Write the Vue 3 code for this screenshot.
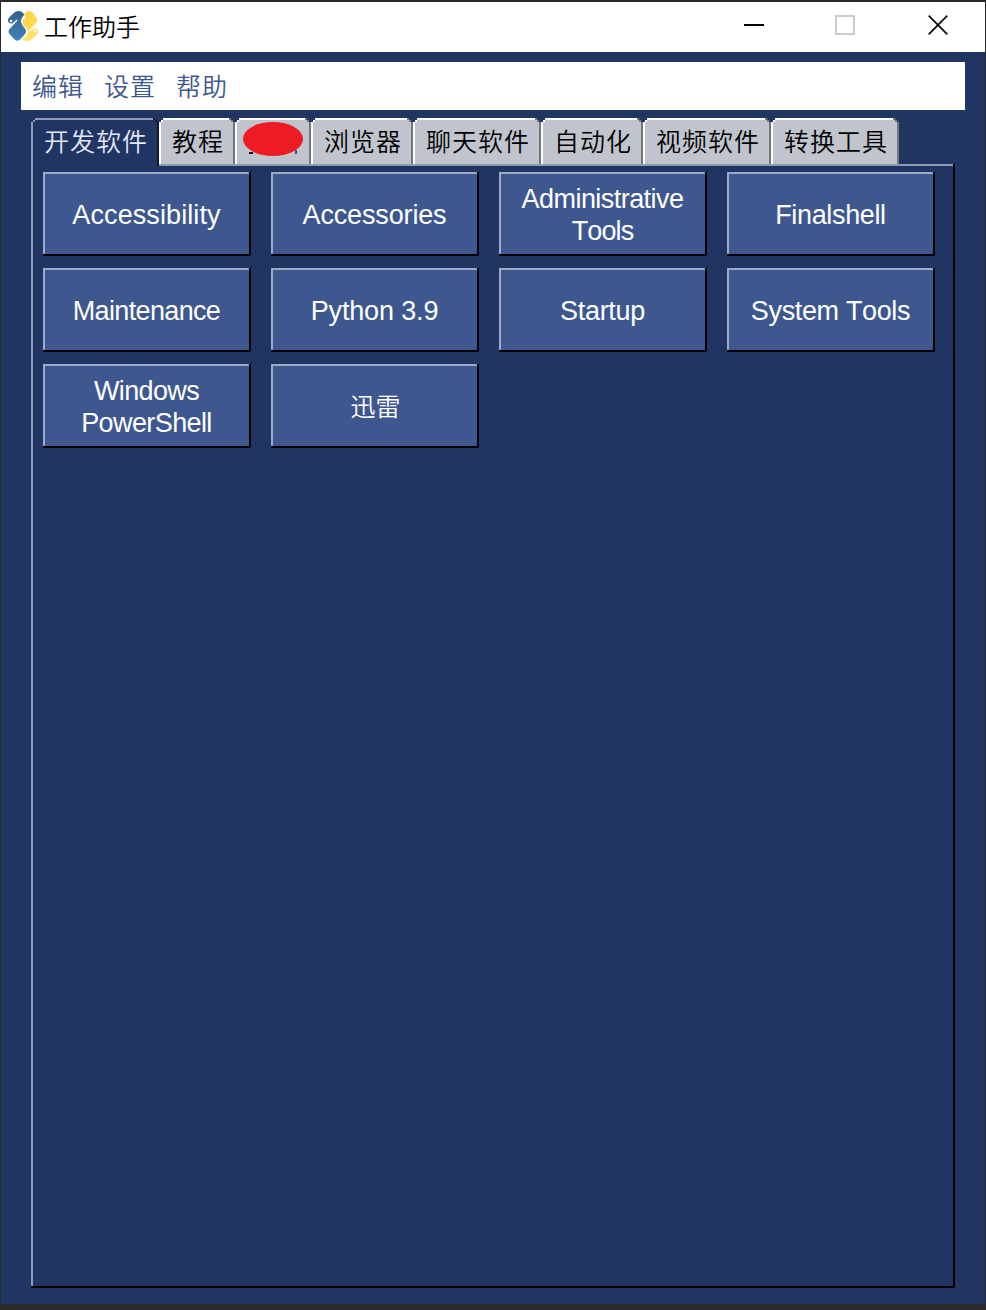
<script setup>
const menus = ['编辑', '设置', '帮助']
const tabs = [
  { label: '开发软件', active: true },
  { label: '教程' },
  { label: '', hidden: true },
  { label: '浏览器' },
  { label: '聊天软件' },
  { label: '自动化' },
  { label: '视频软件' },
  { label: '转换工具' },
]
const apps = [
  [{ t: 'Accessibility', s: 0.1 }],
  [{ t: 'Accessories', s: -0.15 }],
  [{ t: 'Administrative', s: -0.55 }, { t: 'Tools', s: -0.9 }],
  [{ t: 'Finalshell', s: -0.35 }],
  [{ t: 'Maintenance', s: -0.65 }],
  [{ t: 'Python 3.9', s: -0.15 }],
  [{ t: 'Startup', s: -0.3 }],
  [{ t: 'System Tools', s: -0.35 }],
  [{ t: 'Windows', s: -0.65 }, { t: 'PowerShell', s: -0.6 }],
  [{ t: '迅雷', s: 0, cjk: true }],
]
</script>

<template>
  <div class="window">
    <header class="titlebar">
      <svg class="logo" width="32" height="32" viewBox="0 0 32 32">
        <defs>
          <linearGradient id="blue" x1="0" y1="0" x2="0" y2="1">
            <stop offset="0" stop-color="#35618c" /><stop offset="1" stop-color="#3d83bb" />
          </linearGradient>
          <linearGradient id="gold" x1="0" y1="0" x2="0" y2="1">
            <stop offset="0" stop-color="#ffd23c" /><stop offset="1" stop-color="#ffe56e" />
          </linearGradient>
        </defs>
        <path fill="url(#blue)" d="M8 2Q11 .5 14.500 1.500L17.500 4.500Q13.500 8.500 14 12Q14.500 15 18 18.500Q20 21 18.500 23.500L13.500 29Q10.500 32 7.500 29.500L2.500 24Q.5 21.500 2.500 19L10.500 10.500L9.500 9.500L5.500 13.500Q1 14 1 10.500Q1 8.500 3 6.500Z" />
        <path fill="url(#gold)" d="M18 3Q21 0 25 2L29 7Q31.500 10 29 13L21.500 21L22.500 22L26.500 18.500Q31 18 31 21.500Q31 23.500 29 25.500L24 30Q21 31.500 17.500 30.500L15.500 29.500L19.500 25.500Q22 22 19.500 18.500L16.500 15Q14.500 12 16.500 9.500L18.500 7.500Q16.500 5.500 18 3Z" />
        <circle cx="4" cy="11" r="1.300" fill="#fff" /><circle cx="28" cy="21" r="1.300" fill="#fff" />
      </svg>
      <span class="title">工作助手</span>
      <div class="controls">
        <svg width="20" height="20"><path d="M0 10H20" stroke="#000" stroke-width="2" /></svg>
        <svg width="20" height="20"><rect x="1" y="1" width="18" height="18" fill="none" stroke="#ccc" stroke-width="2" /></svg>
        <svg width="20" height="20"><path d="M.7.7L19.300 19.300M19.300.7L.7 19.300" stroke="#0c0c12" stroke-width="1.800" /></svg>
      </div>
    </header>
    <main class="body">
      <nav class="menu"><span v-for="m in menus" :key="m">{{ m }}</span></nav>
      <div class="tabs">
        <div v-for="t in tabs" :key="t.label" class="tab" :class="{ active: t.active }">
          <span>{{ t.label }}</span>
          <svg v-if="t.hidden" class="blot" width="60" height="36" viewBox="0 0 60 36">
            <rect x="6" y="30" width="4" height="2" fill="#111" />
            <rect x="52" y="28" width="2" height="4" fill="#3b558c" />
            <ellipse cx="30" cy="17" rx="30" ry="17" fill="#ed1c24" />
          </svg>
        </div>
      </div>
      <section class="panel">
        <button v-for="(a, i) in apps" :key="i" class="app">
          <span v-for="l in a" :key="l.t" :class="{ cjk: l.cjk }" :style="{ letterSpacing: l.s + 'px' }">{{ l.t }}</span>
        </button>
      </section>
    </main>
  </div>
</template>

<style>
body { margin: 0; background: #282828; }
</style>

<style scoped>
.window {
  box-sizing: border-box;
  width: 986px;
  height: 1310px;
  display: flex;
  flex-direction: column;
  border: solid #2a292b;
  border-width: 2px 1px 6px;
  font-family: "Liberation Sans", "Noto Sans CJK SC", sans-serif;
}
.titlebar {
  height: 50px;
  flex: none;
  display: flex;
  background: #fff;
}
.logo { margin: 8px 0 0 6px; }
.title { margin-left: 5px; font-size: 24px; line-height: 51px; color: #000; font-weight: 350; }
.controls { display: flex; gap: 71px; margin: 13px 37px 0 auto; }
.controls svg { display: block; }
.controls svg:last-child { margin-left: 2px; }
.body {
  flex: 1;
  display: flex;
  flex-direction: column;
  padding: 10px 30px 16px;
  background: #203562;
}
.menu {
  width: 933px;
  height: 48px;
  display: flex;
  gap: 20px;
  margin: 0 0 8px -10px;
  padding-left: 11px;
  background: #fff;
  color: #3e588f;
  font-size: 25px;
  letter-spacing: 1px;
  line-height: 51px;
  font-weight: 350;
}
.tabs { display: flex; height: 46px; }
.tab {
  --light: #fff;
  --dark: #767676;
  box-sizing: border-box;
  position: relative;
  min-width: 76px;
  height: 46px;
  padding: 0 11px 0 13px;
  box-shadow: inset 2px 2px var(--light), inset -2px 0 var(--dark);
  clip-path: polygon(4px 0, calc(100% - 4px) 0, calc(100% - 4px) 2px, calc(100% - 2px) 2px, calc(100% - 2px) 4px, 100% 4px, 100% 100%, 0 100%, 0 4px, 2px 4px, 2px 2px, 4px 2px);
  background: #c0c5cd;
  color: #000;
  font-size: 25px;
  letter-spacing: 1px;
  line-height: 49px;
  font-weight: 350;
  white-space: nowrap;
}
.tab::before,
.tab::after {
  content: "";
  position: absolute;
  width: 2px;
  height: 2px;
}
.tab::before { left: 2px; top: 2px; background: var(--light); }
.tab::after { right: 4px; top: 0; background: var(--dark); box-shadow: 2px 2px var(--dark); }
.tab.active {
  --light: #8f9ab0;
  --dark: #101a31;
  height: 48px;
  z-index: 1;
  background: #203562;
  color: #e3e8f8;
}
.blot {
  position: absolute;
  left: 8px;
  top: 4px;
}
.panel {
  box-sizing: border-box;
  width: 924px;
  height: 1124px;
  display: grid;
  grid-template-columns: repeat(4, 208px);
  grid-auto-rows: 84px;
  align-content: start;
  gap: 12px 20px;
  padding: 8px 12px;
  box-shadow: inset -2px -2px #000, inset 2px 2px #8f9ab0;
}
.app {
  display: flex;
  flex-direction: column;
  align-items: center;
  justify-content: center;
  padding: 2px 1px 0 0;
  border: 0;
  box-shadow: inset -2px -2px #000, inset 2px 2px #9faac7;
  background: #3e588f;
  color: #fff;
  font: 27px/32px "Liberation Sans", "Noto Sans CJK SC", sans-serif;
  font-kerning: none;
}
.app span { display: block; height: 32px; white-space: nowrap; }
.app .cjk { font-size: 25px; font-weight: 350; margin-left: 2px; }
</style>
